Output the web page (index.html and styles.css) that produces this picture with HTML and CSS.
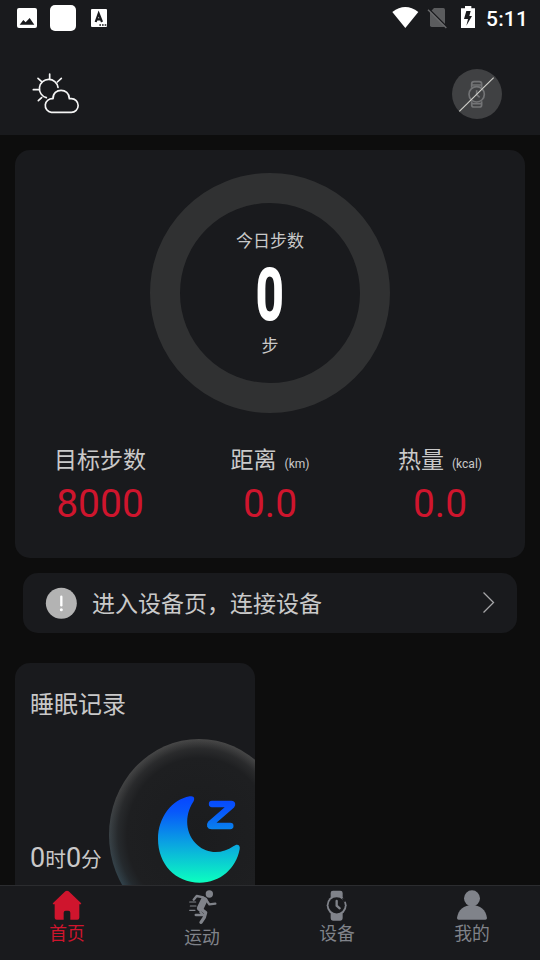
FILE: index.html
```html
<!DOCTYPE html>
<html lang="zh-CN">
<head>
<meta charset="utf-8">
<meta name="viewport" content="width=device-width">
<title>首页</title>
<link rel="stylesheet" href="styles.css">
</head>
<body>
<div class="app">
  <div class="status">
    <svg class="status-left" width="120" height="36" viewBox="0 0 360 108">
      <rect x="51" y="24" width="60" height="60" rx="6" fill="#fff"/>
      <path d="M59 74L70 60L77 67L89 54L103 74Z" fill="#191a1d"/>
      <rect x="150" y="15" width="78" height="78" rx="15" fill="#fff"/>
      <rect x="273" y="27" width="48" height="54" rx="3" fill="#fff"/>
      <path d="M287 66L296 41L306 66M290 58H303" fill="none" stroke="#191a1d" stroke-width="6.5"/>
      <path d="M298 75H319" stroke="#191a1d" stroke-width="5" stroke-dasharray="5 3"/>
    </svg>
    <svg class="status-icons" width="90" height="36" viewBox="0 0 270 108">
      <path d="M0 36Q39 6 78 36L39 84Z" fill="#fff" transform="translate(7 0)"/>
      <path d="M132 24H160Q165 24 165 29V76Q165 81 160 81H125Q120 81 120 76V37Z" fill="#5b5c5e"/>
      <path d="M117 27L171 81" stroke="#191a1d" stroke-width="5"/>
      <path d="M114 29L169 84" stroke="#6a6b6d" stroke-width="4"/>
      <path d="M213 25H225V18H244V25H255V84H213Z" fill="#fff"/>
      <path d="M229 33H242L238 48H246L229 77L234 57H222Z" fill="#191a1d"/>
    </svg>
    <span class="clock">5:11</span>
  </div>
  <header class="header">
    <svg width="48" height="44" viewBox="95 218 144 132" fill="none" stroke="#f5f5f5" stroke-width="5" stroke-linecap="round">
      <path d="M138 295A28 28 0 1 1 173 264"/>
      <path d="M148 224V239M99 271H115M113 237L124 247M183 237L171 248M114 304L124 295"/>
      <path d="M153 339A20 20 0 0 1 158 298C157 265 207 265 207 298H213A20 20 0 0 1 213 339Z" stroke-linejoin="round"/>
    </svg>
    <div class="disconnected">
      <svg width="50" height="50" viewBox="0 0 150 150" fill="none">
        <g stroke="#737476" stroke-width="5"><circle cx="74" cy="76" r="23"/><path d="M59 56V45Q59 38 66 38H82Q89 38 89 45V56M59 48H89M59 97V107Q59 114 66 114H82Q89 114 89 107V97M59 104H89M74 64V77L83 85"/></g>
        <path d="M22 127L125 26" stroke="#d0d0cb" stroke-width="3.5"/>
      </svg>
    </div>
  </header>
  <main class="main">
    <section class="card steps">
      <div class="ring">
        <span class="ring-label">今日步数</span>
        <span class="ring-value">0</span>
        <span class="ring-unit">步</span>
      </div>
      <div class="stats">
        <div class="stat"><div class="stat-label">目标步数</div><div class="stat-value">8000</div></div>
        <div class="stat"><div class="stat-label">距离<small>(km)</small></div><div class="stat-value">0.0</div></div>
        <div class="stat"><div class="stat-label">热量<small>(kcal)</small></div><div class="stat-value">0.0</div></div>
      </div>
    </section>
    <a class="banner">
      <svg width="32" height="32" viewBox="0 0 96 96"><circle cx="49" cy="49" r="46.5" fill="#b3b3b3"/><path d="M49 29V55" stroke="#fff" stroke-width="7" stroke-linecap="round"/><circle cx="49" cy="68" r="4.5" fill="#fff"/></svg>
      <span class="banner-text">进入设备页，连接设备</span>
      <svg width="14" height="24" viewBox="0 0 14 24"><path d="M1.5 1.5L11.5 11.5L1.5 21.5" fill="none" stroke="#a6a6a8" stroke-width="1.3"/></svg>
    </a>
    <section class="card sleep">
      <div class="sleep-info">
        <h2>睡眠记录</h2>
        <p><b>0</b>时<b>0</b>分</p>
      </div>
      <svg class="sleep-art" width="147" height="152" viewBox="279 234 441 456">
        <defs>
          <linearGradient id="rim" x1="0" y1="0" x2="0" y2="1"><stop offset="0" stop-color="#484848"/><stop offset=".3" stop-color="#414243"/><stop offset=".75" stop-color="#31424b"/><stop offset="1" stop-color="#31424b"/></linearGradient>
          <radialGradient id="well"><stop offset="0" stop-color="#1b1c1e"/><stop offset=".8" stop-color="#1e1f21"/><stop offset=".9" stop-color="#1e1f21" stop-opacity=".7"/><stop offset="1" stop-color="#1e1f21" stop-opacity="0"/></radialGradient>
          <linearGradient id="night" gradientUnits="userSpaceOnUse" x1="0" y1="408" x2="0" y2="668"><stop offset="0" stop-color="#0745ff"/><stop offset=".18" stop-color="#0758fb"/><stop offset=".55" stop-color="#0aa4e1"/><stop offset="1" stop-color="#0bffbf"/></linearGradient>
        </defs>
        <ellipse cx="552" cy="525" rx="270" ry="288" fill="url(#rim)"/>
        <ellipse cx="552" cy="525" rx="270" ry="288" fill="url(#well)"/>
        <path d="M524 409C538 406 541 416 534 427C508 467 510 523 548 556C576 582 622 583 655 559C667 549 677 556 674 568C663 626 616 668 554 668C481 668 429 612 429 537C429 473 470 419 524 409Z" fill="url(#night)"/>
        <path d="M591 432H649Q653 432 650 436L587 491Q582 498 590 498H646" fill="none" stroke="url(#night)" stroke-width="19" stroke-linecap="round" stroke-linejoin="round"/>
      </svg>
    </section>
  </main>
  <nav class="tabs">
    <a class="tab active"><svg width="32" height="32" viewBox="0 0 96 96"><path d="M43 4Q48 0 53 4L89 38Q93 43 88 43H85V83Q85 89 79 89H58V68Q58 62 52 62H44Q38 62 38 68V89H17Q11 89 11 83V43H8Q3 43 7 38Z" fill="#cf152d"/></svg><span>首页</span></a>
    <a class="tab sport"><svg width="32" height="36" viewBox="0 0 96 108" fill="none" stroke="#80838a" stroke-linecap="round" stroke-linejoin="round"><circle cx="70" cy="12" r="11" fill="#80838a" stroke="none"/><path d="M23 29L32 18L52 22" stroke-width="7"/><path d="M54 31L43 54" stroke-width="20"/><path d="M61 30L70 43L88 41" stroke-width="7"/><path d="M46 58L59 68L55 82L45 97" stroke-width="10"/><path d="M43 66L52 75L29 75" stroke-width="7"/><path d="M11 36H29M13 48H30M11 61H27" stroke-width="3.5"/></svg><span>运动</span></a>
    <a class="tab"><svg width="32" height="32" viewBox="0 0 96 96"><path d="M29 25V9Q29 2 36 2H58Q65 2 65 9V25M29 66V85Q29 92 36 92H58Q65 92 65 85V66" fill="#80838a"/><circle cx="47" cy="46" r="30" fill="#80838a"/><circle cx="47" cy="46" r="24.5" fill="#191a1d"/><path d="M63 25L75 24L78 34L68 36Z" fill="#191a1d"/><path d="M47 33V47L56 55" fill="none" stroke="#80838a" stroke-width="7" stroke-linecap="round"/></svg><span>设备</span></a>
    <a class="tab"><svg width="32" height="32" viewBox="0 0 96 96" fill="#80838a"><circle cx="48" cy="25" r="24"/><path d="M3 84C6 60 24 45 48 45S90 60 93 84Q93 89 88 89H8Q3 89 3 84Z"/></svg><span>我的</span></a>
  </nav>
</div>
</body>
</html>
```

FILE: styles.css
```css
* { box-sizing: border-box; }
body {
  margin: 0;
  background: #0d0d0d;
  color: #c9c9c9;
  font-family: Roboto, "Noto Sans CJK SC", sans-serif;
}
svg { display: block; flex: none; }
.app { display: flex; flex-direction: column; width: 540px; height: 960px; overflow: hidden; }
.status { display: flex; height: 36px; flex: none; background: #191a1d; }
.status-icons { margin-left: auto; }
.clock { width: 60px; padding-left: 6px; color: #fff; font-size: 21px; font-weight: 500; line-height: 38px; letter-spacing: .2px; }
.header { display: flex; justify-content: space-between; align-items: flex-start; height: 99px; flex: none; padding: 33px 38px 0 32px; background: #191a1d; }
.header > svg { margin-top: 3px; }
.disconnected { width: 50px; height: 50px; border-radius: 50%; background: #404143; }
.main { flex: 1; min-height: 0; overflow: hidden; padding: 15px 15px 0; }
.card { background: #191a1d; border-radius: 15px; }
.steps { height: 408px; padding-top: 23px; }
.ring { display: flex; flex-direction: column; align-items: center; width: 240px; height: 240px; margin: 0 auto; padding-top: 26px; border: 30px solid #303132; border-radius: 50%; }
.ring-label, .ring-unit { font-size: 17px; line-height: 25px; }
.ring-value { height: 80px; color: #fff; font-size: 70px; font-weight: 500; line-height: 82px; transform: scaleX(.68); -webkit-text-stroke: 3px #fff; }
.stats { display: grid; grid-template-columns: repeat(3, 170px); margin-top: 31px; text-align: center; }
.stat-label { height: 34px; font-size: 23px; line-height: 34px; white-space: nowrap; }
.stat-label small { margin-left: 8px; font-size: 12px; line-height: 1; }
.stat-value { color: #cf152d; font-size: 39px; line-height: 46px; margin-top: 3px; }
.banner { display: flex; align-items: center; height: 60px; margin: 15px 8px 0; padding: 0 21px 0 22px; border-radius: 15px; background: #191a1d; }
.banner-text { flex: 1; margin: 3px 0 0 15px; font-size: 23px; line-height: 34px; }
.sleep { position: relative; display: flex; width: 240px; height: 240px; margin-top: 30px; overflow: hidden; }
.sleep-info { display: flex; flex-direction: column; justify-content: space-between; height: 215px; padding: 25px 0 0 15px; }
.sleep h2 { margin: 0; font-size: 24px; font-weight: 400; line-height: 34px; }
.sleep p { margin: 0; font-size: 20.7px; line-height: 36px; }
.sleep b { font-size: 27px; font-weight: 400; }
.sleep-art { position: absolute; right: 0; top: 75px; }
.tabs { display: grid; grid-template-columns: repeat(4, 135px); height: 75px; flex: none; border-top: 1px solid #2b2c2f; background: #191a1d; }
.tab { display: flex; flex-direction: column; align-items: center; gap: 1px; padding: 4px 1px 0 0; color: #80838a; font-size: 17.8px; line-height: 22px; }
.active { color: #cf152d; }
```
